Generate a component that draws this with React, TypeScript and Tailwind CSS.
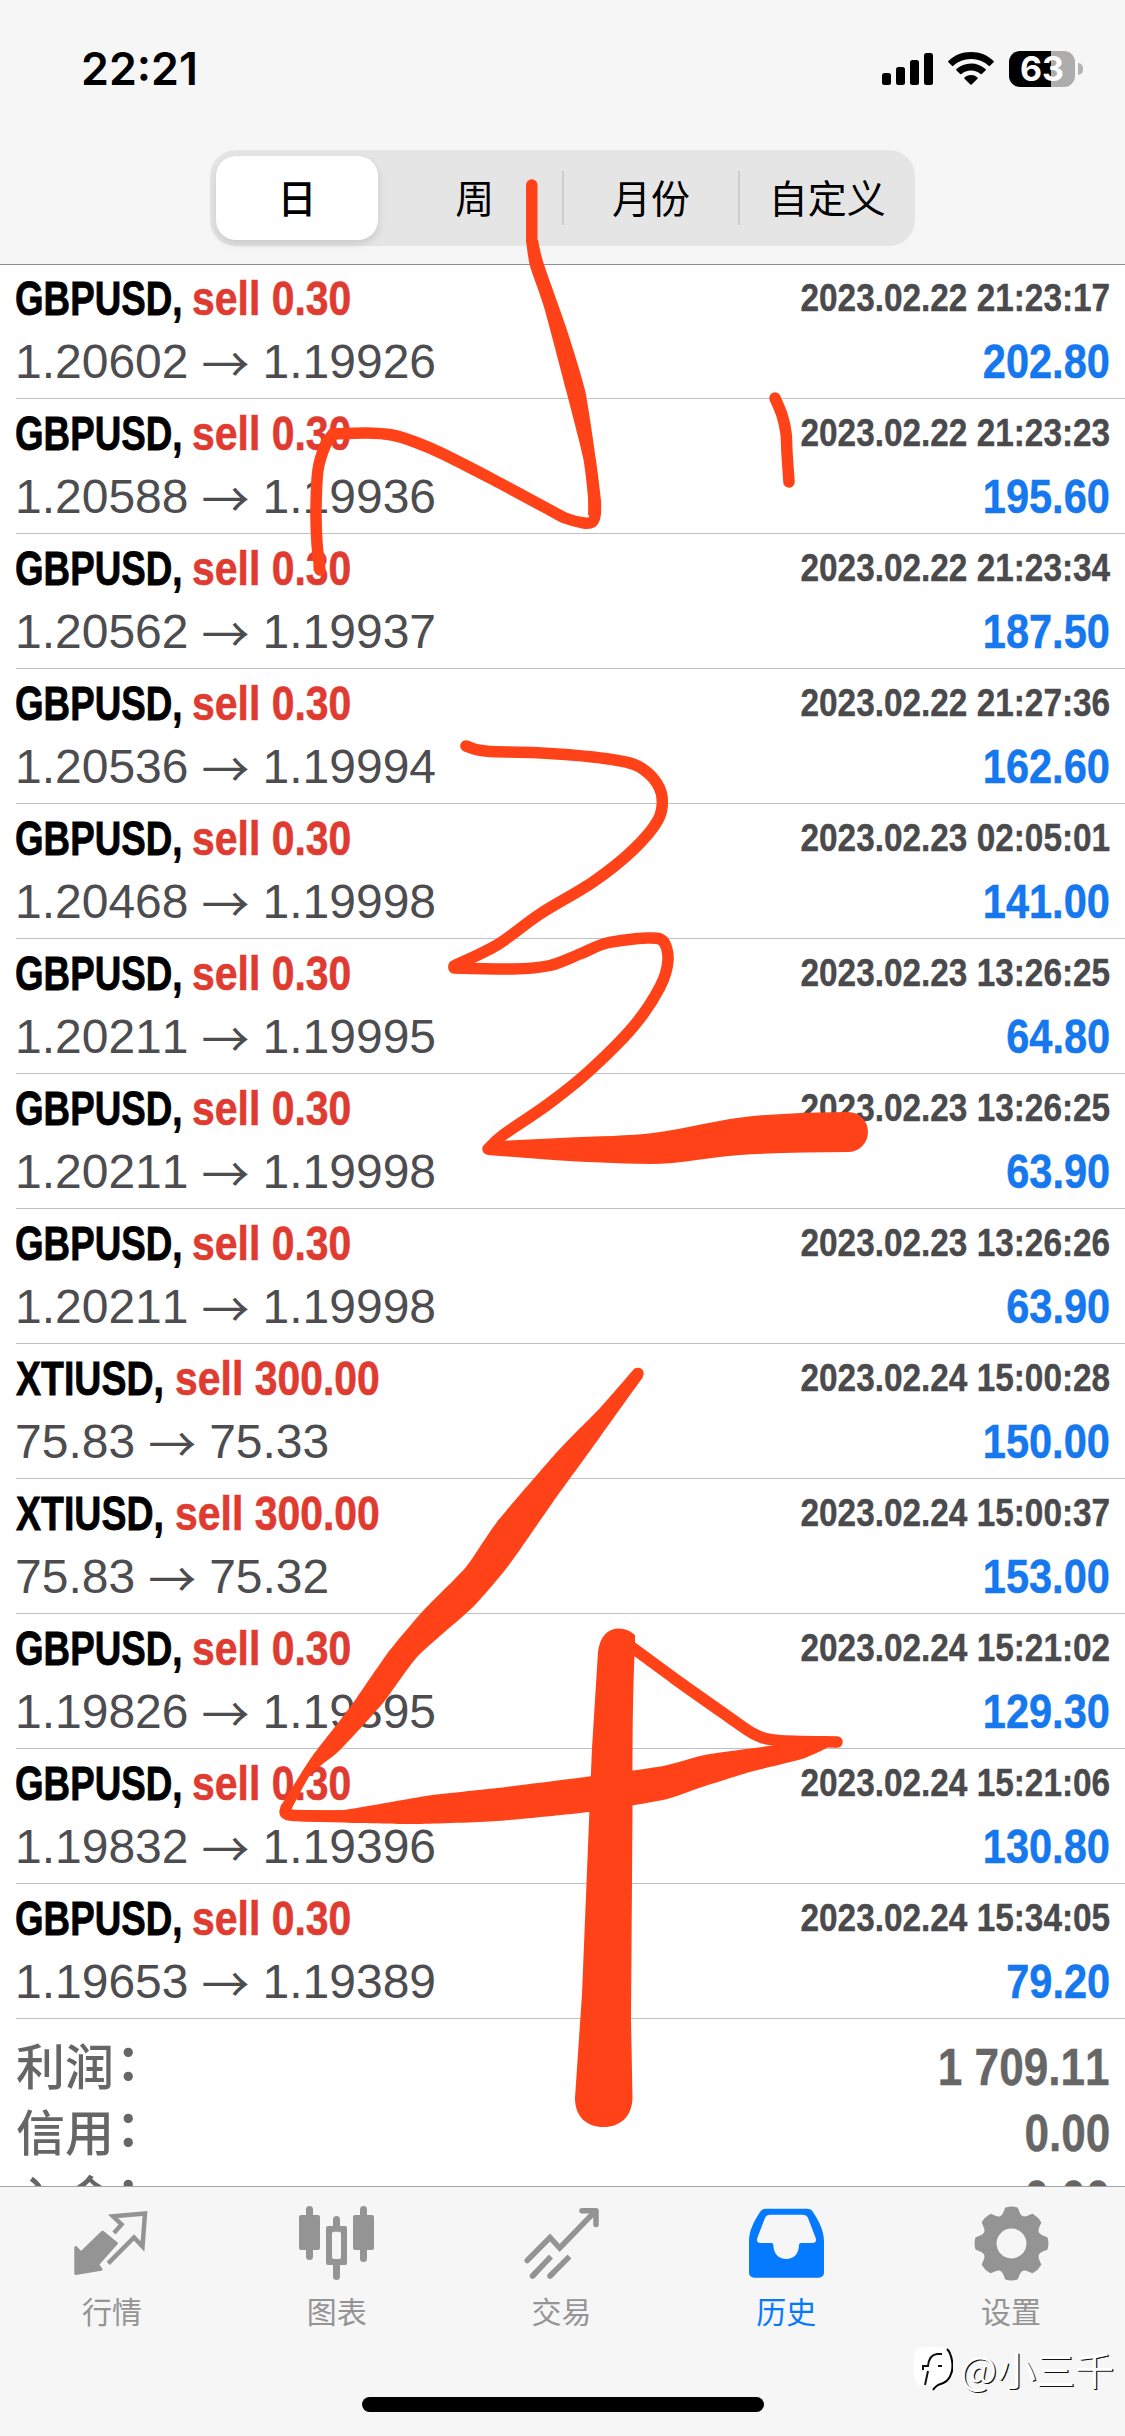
import clsx from "clsx"

const SANS = "font-['Liberation_Sans','Noto_Sans_CJK_SC',sans-serif]"
const CJK = "font-['Noto_Sans_CJK_SC',sans-serif]"

interface Deal {
  symbol: string
  volume: string
  open: string
  close: string
  time: string
  profit: string
}

const deals: Deal[] = [
  { symbol: "GBPUSD", volume: "0.30", open: "1.20602", close: "1.19926", time: "2023.02.22 21:23:17", profit: "202.80" },
  { symbol: "GBPUSD", volume: "0.30", open: "1.20588", close: "1.19936", time: "2023.02.22 21:23:23", profit: "195.60" },
  { symbol: "GBPUSD", volume: "0.30", open: "1.20562", close: "1.19937", time: "2023.02.22 21:23:34", profit: "187.50" },
  { symbol: "GBPUSD", volume: "0.30", open: "1.20536", close: "1.19994", time: "2023.02.22 21:27:36", profit: "162.60" },
  { symbol: "GBPUSD", volume: "0.30", open: "1.20468", close: "1.19998", time: "2023.02.23 02:05:01", profit: "141.00" },
  { symbol: "GBPUSD", volume: "0.30", open: "1.20211", close: "1.19995", time: "2023.02.23 13:26:25", profit: "64.80" },
  { symbol: "GBPUSD", volume: "0.30", open: "1.20211", close: "1.19998", time: "2023.02.23 13:26:25", profit: "63.90" },
  { symbol: "GBPUSD", volume: "0.30", open: "1.20211", close: "1.19998", time: "2023.02.23 13:26:26", profit: "63.90" },
  { symbol: "XTIUSD", volume: "300.00", open: "75.83", close: "75.33", time: "2023.02.24 15:00:28", profit: "150.00" },
  { symbol: "XTIUSD", volume: "300.00", open: "75.83", close: "75.32", time: "2023.02.24 15:00:37", profit: "153.00" },
  { symbol: "GBPUSD", volume: "0.30", open: "1.19826", close: "1.19395", time: "2023.02.24 15:21:02", profit: "129.30" },
  { symbol: "GBPUSD", volume: "0.30", open: "1.19832", close: "1.19396", time: "2023.02.24 15:21:06", profit: "130.80" },
  { symbol: "GBPUSD", volume: "0.30", open: "1.19653", close: "1.19389", time: "2023.02.24 15:34:05", profit: "79.20" },
]

const summary = [
  { label: "利润", value: "1 709.11" },
  { label: "信用", value: "0.00" },
  { label: "入金", value: "0.00" },
]

const periods = ["日", "周", "月份", "自定义"]

/* STATUS BAR */

function StatusBar() {
  return (
    <div className="flex h-[150px] items-start justify-between pt-[51px] pr-[42px] pl-[81px]">
      <span className="origin-left scale-x-[0.995] font-['Inter',sans-serif] text-[45px] leading-9 font-semibold text-black">
        22:21
      </span>
      <div className="flex items-start">
        <svg width="52" height="36" viewBox="0 0 52 36" className="mr-[14px]">
          <rect x="0" y="22" width="9" height="12" rx="2.5" />
          <rect x="14" y="16" width="9" height="18" rx="2.5" />
          <rect x="28" y="9" width="9" height="25" rx="2.5" />
          <rect x="42" y="2" width="9" height="32" rx="2.5" />
        </svg>
        <svg width="46" height="36" viewBox="0 0 46 36" className="mr-[15px]">
          <path d="M23 1C14.2 1 6.2 4.3.4 9.9a.9.9 0 0 0 0 1.3l3.6 3.6a.9.9 0 0 0 1.3 0A25.5 25.5 0 0 1 23 8a25.5 25.5 0 0 1 17.7 6.8.9.9 0 0 0 1.3 0l3.6-3.6a.9.9 0 0 0 0-1.3C39.8 4.3 31.8 1 23 1Z" />
          <path d="M23 12.5c-5.6 0-10.7 2.1-14.5 5.6a.9.9 0 0 0 0 1.3l3.7 3.6a.9.9 0 0 0 1.2 0A14 14 0 0 1 23 19.4a14 14 0 0 1 9.6 3.6.9.9 0 0 0 1.2 0l3.7-3.6a.9.9 0 0 0 0-1.3A21.4 21.4 0 0 0 23 12.5Z" />
          <path d="M23 24c-2.5 0-4.8.9-6.5 2.4a.9.9 0 0 0 0 1.3l5.9 5.9a.9.9 0 0 0 1.2 0l5.9-5.9a.9.9 0 0 0 0-1.3A9.8 9.8 0 0 0 23 24Z" />
        </svg>
        <div className="flex h-9 w-[66px] items-center justify-center rounded-[11px] bg-linear-to-r from-black from-[64%] to-[#adadad] to-[64%]">
          <span className="font-['Inter',sans-serif] text-[34px] leading-9 font-bold text-white">63</span>
        </div>
        <div className="mt-3 ml-[3px] h-3 w-[5px] rounded-r-full bg-[#b4b4b4]" />
      </div>
    </div>
  )
}

function PeriodPicker() {
  return (
    <div className={clsx("mx-auto flex h-24 w-[705px] items-center rounded-[26px] bg-[#e5e5e6]", CJK)}>
      {periods.map((name, i) => (
        <div key={name} className="flex h-full flex-1 items-center">
          <div className={clsx("-ml-px h-[54px] w-[2px] shrink-0", i > 1 && "bg-[#cfcfd1]")} />
          {i === 0 ? (
            <div className="mr-2 ml-[5px] flex h-[84px] flex-1 items-center justify-center rounded-[20px] bg-white pb-[3px] text-[39px] font-medium shadow-[0_4px_8px_rgba(0,0,0,0.12)]">
              {name}
            </div>
          ) : (
            <div className="flex-1 pb-[3px] text-center text-[39px] leading-none whitespace-nowrap">{name}</div>
          )}
        </div>
      ))}
    </div>
  )
}

/* HISTORY LIST */

function DealRow({ deal }: { deal: Deal }) {
  const isOil = deal.symbol === "XTIUSD"
  return (
    <div className="ml-4 flex h-[135px] shrink-0 flex-col gap-4 border-b border-[#c0c0c2] pt-[10px] pr-[15px] leading-[48px] whitespace-nowrap [font-kerning:none]">
      <div className="flex h-12 justify-between font-bold">
        <div className="flex text-[49px]">
          <div className={isOil ? "w-[159px]" : "w-[176px]"}>
            <span
              className={clsx(
                "inline-block origin-left text-black [-webkit-text-stroke:0.8px_#000]",
                isOil ? "scale-x-[0.765]" : "-ml-px scale-x-[0.75]",
              )}
            >
              {deal.symbol},
            </span>
          </div>
          <span className="inline-block origin-left scale-x-[0.835] text-[#df3b30] [-webkit-text-stroke:0.6px_#df3b30]">
            sell {deal.volume}
          </span>
        </div>
        <span className="inline-block origin-right scale-x-[0.855] text-[39px] text-[#4a4a4d] [-webkit-text-stroke:0.4px_#4a4a4d]">
          {deal.time}
        </span>
      </div>
      <div className="flex h-12 justify-between text-[48px]">
        <div className="-ml-px flex gap-[13px] text-[#4d4d50]">
          <span>{deal.open}</span>
          <span className={clsx("-mt-px w-12 font-normal", CJK)}>→</span>
          <span>{deal.close}</span>
        </div>
        <span className="inline-block origin-right scale-x-[0.865] font-bold text-[#1578ee] [-webkit-text-stroke:0.5px_#1578ee]">
          {deal.profit}
        </span>
      </div>
    </div>
  )
}

function Summary() {
  return (
    <div className="flex flex-col pt-[15px] pr-[15px] pl-4 text-[#666] [font-kerning:none]">
      {summary.map((item) => (
        <div key={item.label} className="flex h-[66px] shrink-0 justify-between">
          <div className={clsx("-mt-[3px] flex text-[49px] leading-[66px] font-medium", CJK)}>
            <span>{item.label}</span>
            <span className="-mt-[5px] ml-[2px] font-bold">：</span>
          </div>
          <span className="origin-right scale-x-[0.865] text-[51px] leading-[67px] font-bold [-webkit-text-stroke:0.4px_#666]">
            {item.value}
          </span>
        </div>
      ))}
    </div>
  )
}

/* TAB BAR */

function QuotesIcon() {
  return (
    <svg width="75" height="75" viewBox="0 0 75 75" fill="none">
      <path
        d="M1.8 41.5 7 47 28.6 26.2 42.4 37.3 23.5 58.5 27 63.3 1.8 67.5Z"
        fill="currentColor"
        stroke="currentColor"
        strokeWidth="3"
        strokeLinejoin="round"
      />
      <path d="M40 27 47.5 18.5 39 10.3 71 7.5 68.5 40.5 60 31.5 34.2 57.3" stroke="currentColor" strokeWidth="4.5" />
    </svg>
  )
}

function ChartIcon() {
  return (
    <svg width="75" height="75" viewBox="0 0 75 75" fill="currentColor">
      <rect x="0" y="9" width="21" height="35" rx="2" />
      <rect x="7" y="0" width="7" height="54" rx="3.5" />
      <rect x="34" y="10" width="7" height="14" rx="3.5" />
      <rect x="34" y="56" width="7" height="18" rx="3.5" />
      <path
        fillRule="evenodd"
        d="M29 20h17a2 2 0 0 1 2 2v35a2 2 0 0 1-2 2H29a2 2 0 0 1-2-2V22a2 2 0 0 1 2-2Zm6 5.7a2 2 0 0 0-2 2V51a2 2 0 0 0 2 2h5a2 2 0 0 0 2-2V27.7a2 2 0 0 0-2-2Z"
      />
      <rect x="54" y="9" width="21" height="35" rx="2" />
      <rect x="61" y="0" width="7" height="56" rx="3.5" />
    </svg>
  )
}

function TradeIcon() {
  return (
    <svg width="75" height="75" viewBox="0 0 75 75" fill="none" stroke="currentColor" strokeWidth="5.5">
      <path d="M3.2 54.5 26 31.5 35.7 42 71.5 5" strokeLinecap="round" />
      <path d="M58 4.7H72V18.5" strokeLinecap="round" strokeLinejoin="round" />
      <path d="M8.5 70 27 50.5M26 70 45.5 50.5" />
      <path d="M8.5 70 12 66.3M26 70 29.5 66.3" strokeLinecap="round" />
    </svg>
  )
}

function HistoryIcon() {
  return (
    <svg width="75" height="75" viewBox="0 0 75 75" fill="currentColor">
      <path
        fillRule="evenodd"
        d="M17 2.7H58Q62 2.7 64 6C70 15 75 25 75 35V66.7a5 5 0 0 1-5 5H5a5 5 0 0 1-5-5V35C0 25 5 15 11 6Q13 2.7 17 2.7ZM21.5 8.7Q17.5 8.7 16 12L8.3 32Q7 37 11.5 37H22.5Q24.3 37 24.3 39C24.6 48 30 53 37.3 53S49.8 48 50 39Q50 37 52 37H63.5Q68 37 66.7 32L59 12Q57.5 8.7 53.5 8.7Z"
      />
    </svg>
  )
}

// eight teeth around a ring, angles in degrees
const gearPath = (() => {
  const at = (deg: number, r: number) => {
    const a = (deg * Math.PI) / 180
    return `${(37.5 + r * Math.cos(a)).toFixed(2)} ${(37.5 + r * Math.sin(a)).toFixed(2)}`
  }
  let d = ""
  for (let i = 0; i < 8; i++) {
    const c = i * 45
    d += `${i === 0 ? "M" : "L"}${at(c - 14, 31.5)}L${at(c - 9, 35.8)}Q${at(c, 37)} ${at(c + 9, 35.8)}L${at(c + 14, 31.5)}Q${at(c + 22.5, 26.5)} ${at(c + 31, 31.5)}`
  }
  return `${d}ZM53.2 37.5a15.7 15.7 0 1 0-31.4 0a15.7 15.7 0 1 0 31.4 0Z`
})()

function SettingsIcon() {
  return (
    <svg width="75" height="75" viewBox="0 0 75 75" fill="currentColor">
      <path fillRule="evenodd" d={gearPath} stroke="currentColor" strokeWidth="1.5" strokeLinejoin="round" />
    </svg>
  )
}

const tabs = [
  { name: "行情", icon: QuotesIcon },
  { name: "图表", icon: ChartIcon },
  { name: "交易", icon: TradeIcon },
  { name: "历史", icon: HistoryIcon },
  { name: "设置", icon: SettingsIcon },
]

function TabBar() {
  return (
    <nav className="flex h-[250px] shrink-0 flex-col border-t border-[#a3a3a3] bg-[#f6f6f6]">
      <div className="grid grid-cols-5 pt-[19px] pr-px">
        {tabs.map((tab) => (
          <div
            key={tab.name}
            className={clsx(
              "-ml-px flex flex-col items-center gap-[11px]",
              tab.name === "历史" ? "text-[#057aff]" : "text-[#949494]",
            )}
          >
            <tab.icon />
            <span className={clsx("text-[30px] leading-9", CJK)}>{tab.name}</span>
          </div>
        ))}
      </div>
      <div className={clsx("mt-[19px] mr-[11px] flex h-11 items-center justify-end gap-[7px]", CJK)}>
        <svg width="40" height="48" viewBox="0 0 40 48" fill="none">
          <path d="M10 2H28Q39 4 39 17V28Q38 40 27 41L22 45V41H10Q1 40 1 30V14Q1 3 10 2Z" fill="#fff" />
          <path d="M34 4C39 9 41 22 38 29C36 37 29 39 25 40Q22 42 20 45" stroke="#000" strokeWidth="2" />
          <path d="M29 9H24Q16 10 15 21H10V25M15 26 12 40M25 21H29" stroke="#111" strokeWidth="2" />
        </svg>
        <span className="pb-px text-[39px] leading-none text-white [text-shadow:1.2px_1.2px_0_#111]">@小三千</span>
      </div>
      <div className="mx-auto mt-[6px] h-[15px] w-[402px] rounded-full bg-black" />
    </nav>
  )
}

/* MARKER DRAWING */

type Point = [number, number]

// cardinal spline through the points, written as cubic segments
function curve(points: Point[], k: number) {
  let d = ""
  for (let i = 0; i < points.length - 1; i++) {
    const p0 = points[i - 1] ?? points[i]
    const [p1, p2] = [points[i], points[i + 1]]
    const p3 = points[i + 2] ?? p2
    d += `C${p1[0] + (p2[0] - p0[0]) / k} ${p1[1] + (p2[1] - p0[1]) / k} ${p2[0] - (p3[0] - p1[0]) / k} ${p2[1] - (p3[1] - p1[1]) / k} ${p2[0]} ${p2[1]}`
  }
  return d
}

const line = (points: Point[]) => `M${points[0].join(" ")}${curve(points, 6.5)}`
const blob = (a: Point[], b: Point[]) => `M${a[0].join(" ")}${curve(a, 10)}L${b[0].join(" ")}${curve(b, 10)}Z`

const strokes = [
  line([[594, 500], [595, 515], [592, 522], [584, 523], [565, 518], [548, 509], [494, 480], [441, 453], [415, 442], [392, 435], [366, 433], [333, 434]]),
  line([[333, 434], [325, 446], [318, 470], [316, 510], [317, 543], [320, 570]]),
  line([[775, 398], [782, 415], [786, 433], [787, 453], [789, 482]]),
  line([[466, 746], [476, 749.5], [490, 751.5], [537, 752.7], [593, 757], [633, 764], [653, 778], [662, 797], [658, 820], [633, 850], [593, 882], [540, 914], [497, 945], [454, 966]]),
  line([[454, 968], [513, 969], [550, 965.5], [580, 954], [607, 943], [647, 938], [663, 941], [668, 960], [660, 987], [633, 1027], [587, 1073], [547, 1105], [503, 1135], [488, 1149]]),
  line([[837, 1742], [778, 1740.5], [754, 1734], [726, 1715], [675, 1679], [622, 1640]]),
  line([[286, 1808], [290, 1815], [343, 1816]]),
]

const fills = [
  blob(
    [[526, 240], [530, 266], [544, 307], [566, 390], [583, 457], [588, 497], [588, 515]],
    [[601, 515], [601, 500], [596, 460], [585, 390], [566, 327], [543.5, 263], [538, 240]],
  ),
  // underline that widens to a round end
  "M500 1141L560 1138C600 1136 630 1136 653 1133C690 1128 720 1119 753 1116Q800 1112 848 1112A20 20 0 0 1 848 1152Q790 1152 740 1155C710 1157 680 1164 650 1164Q600 1163 553 1160L487 1155Z",
  blob(
    [[635, 1368], [600, 1408], [557, 1452], [497, 1522], [466, 1567], [422, 1612], [387, 1654], [351, 1706], [311, 1758], [281, 1806]],
    [[290, 1812], [311, 1774], [339, 1751], [383, 1703], [418, 1656], [473, 1607], [509, 1565], [553, 1502], [600, 1437], [643, 1377]],
  ),
  blob(
    [[290, 1810], [343, 1810], [426, 1796], [497, 1788], [589, 1776.5], [663, 1766], [707, 1754.5], [778, 1745], [838, 1740]],
    [[825, 1749], [802, 1759], [750, 1772], [699, 1788], [663, 1800], [589, 1812], [497, 1821], [418, 1824], [355, 1823], [290, 1821]],
  ),
  // vertical bar, straight sides with round ends
  "M635 1645Q632 1700 632.5 1810L631 2020L632.5 2098C632 2117 620 2127 603.5 2127S575 2117 575 2098L582 1994L592 1748L598 1652C600 1636 608 1628.5 619 1628.5Q628 1628.5 635 1635Z",
]

function MarkerLayer() {
  return (
    <svg className="pointer-events-none absolute inset-0" width="1125" height="2436" viewBox="0 0 1125 2436">
      <g fill="none" stroke="#ff4217" strokeWidth="11.5" strokeLinecap="round" strokeLinejoin="round">
        <path d="M531.8 185V241" />
        {strokes.map((d) => (
          <path key={d} d={d} />
        ))}
        <path d="M638 1373.5 633 1379" />
      </g>
      <g fill="#ff4217">
        {fills.map((d) => (
          <path key={d} d={d} />
        ))}
      </g>
    </svg>
  )
}

export default function App() {
  return (
    <div className={clsx("relative flex h-[2436px] w-[1125px] flex-col overflow-hidden bg-white", SANS)}>
      <header className="h-[265px] shrink-0 border-b border-[#8e8e90] bg-[#f6f6f6]">
        <StatusBar />
        <PeriodPicker />
      </header>

      <main className="-mt-px flex min-h-0 flex-1 flex-col overflow-hidden">
        {deals.map((deal, i) => (
          <DealRow key={i} deal={deal} />
        ))}
        <Summary />
      </main>

      <TabBar />
      <MarkerLayer />
    </div>
  )
}
